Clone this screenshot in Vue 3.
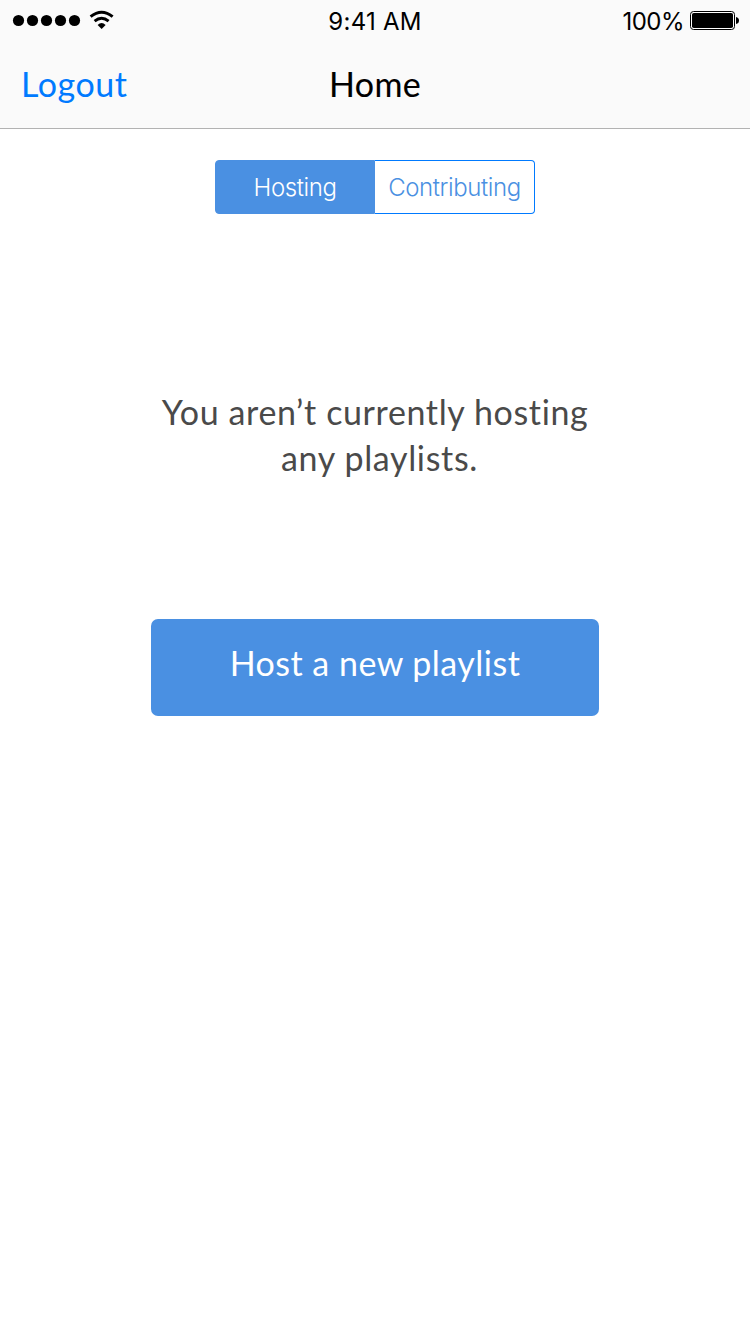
<script setup>
import { ref } from 'vue'

const tabs = ['Hosting', 'Contributing']
const active = ref('Hosting')
</script>

<template>
  <div class="screen">
    <header class="header">
      <div class="status">
        <div class="signal">
          <svg width="120" height="40" viewBox="0 0 120 40">
            <circle v-for="n in 5" :key="n" :cx="4.5 + n * 14" cy="20.5" r="5.6" />
            <path d="M90.6 16.6 Q101.6 7.8 112.6 16.6" fill="none" stroke="#000" stroke-width="3" />
            <path d="M94.6 21.2 Q101.6 15.4 108.6 21.2" fill="none" stroke="#000" stroke-width="2.9" />
            <path d="M97.6 24.9 Q101.6 21 105.6 24.9 L101.6 28.9 Z" />
          </svg>
        </div>
        <div class="clock">9:41 AM</div>
        <div class="power">
          <span class="percent">100%</span>
          <svg width="50" height="20" viewBox="0 0 50 20">
            <rect x="0.5" y="0.5" width="44" height="18" rx="3" fill="#fff" stroke="#000" />
            <rect x="2" y="2" width="41" height="15" rx="1.8" />
            <path d="M46 6 Q49 6.5 49 9.5 T46 13 Z" />
          </svg>
        </div>
      </div>
      <nav class="nav">
        <a class="logout">Logout</a>
        <h1 class="title">Home</h1>
      </nav>
    </header>

    <main class="main">
      <div class="segments">
        <button
          v-for="tab in tabs"
          :key="tab"
          class="segment"
          :class="{ active: active === tab }"
          @click="active = tab"
        >{{ tab }}</button>
      </div>
      <p class="message">
        <span class="first">You aren’t currently hosting</span>
        <span class="second">any playlists.</span>
      </p>
      <button class="host">Host a new playlist</button>
    </main>
  </div>
</template>

<style>
html,
body {
  background: #fff;
}
</style>

<style scoped>
.screen {
  box-sizing: border-box;
  width: 750px;
  height: 1334px;
  background: #fff;
  font-family: Lato, "Open Sans", sans-serif;
  font-size: 34px;
  overflow: hidden;
}
.header {
  box-sizing: border-box;
  height: 129px;
  background: #fafafa;
  border-bottom: 1px solid #b2b2b2;
}
.status {
  display: grid;
  grid-template-columns: 1fr auto 1fr;
  height: 40px;
  font-family: Inter, sans-serif;
  font-size: 24px;
  line-height: 44px;
  color: #000;
}
.signal svg {
  display: block;
}
.clock {
  letter-spacing: 0.25px;
}
.power {
  display: flex;
  justify-content: flex-end;
}
.power svg {
  margin: 11px 10px 0 6px;
}
.percent {
  letter-spacing: -0.5px;
}
.nav {
  display: grid;
  grid-template-columns: 1fr auto 1fr;
  line-height: 88px;
  height: 88px;
}
.logout {
  padding-left: 21px;
  color: #007aff;
  letter-spacing: 0.55px;
}
.title {
  margin: 0;
  font-size: 34px;
  font-weight: 400;
  -webkit-text-stroke: 0.1px #000;
  letter-spacing: 0.3px;
}
.main {
  display: flex;
  flex-direction: column;
  align-items: center;
}
button {
  margin: 0;
  padding: 0;
  border: 0;
  font: inherit;
}
.segments {
  box-sizing: border-box;
  display: grid;
  grid-template-columns: 160px 160px;
  width: 320px;
  height: 54px;
  margin-top: 31px;
}
.segment {
  box-sizing: border-box;
  padding-top: 1px;
  border: 1px solid #007aff;
  border-left: 0;
  border-radius: 0 4px 4px 0;
  background: #fff;
  color: #4a90e2;
  font-family: Inter, sans-serif;
  font-size: 24px;
  font-weight: 300;
  line-height: 51px;
  letter-spacing: -0.4px;
  white-space: nowrap;
}
.segment:first-child {
  border: 1px solid #4a90e2;
  border-radius: 4px 0 0 4px;
}
.segment.active {
  background: #4a90e2;
  color: #fff;
}
.message {
  margin: 175px 0 0;
  color: #4a4a4a;
  line-height: 46px;
  text-align: center;
}
.message span {
  display: block;
  white-space: nowrap;
}
.first {
  letter-spacing: 0.63px;
}
.second {
  padding-left: 9px;
  letter-spacing: 0.65px;
}
.host {
  width: 448px;
  height: 97px;
  margin-top: 138px;
  padding-bottom: 11px;
  border-radius: 7px;
  background: #4a90e2;
  color: #fff;
  letter-spacing: 0.48px;
}
</style>
